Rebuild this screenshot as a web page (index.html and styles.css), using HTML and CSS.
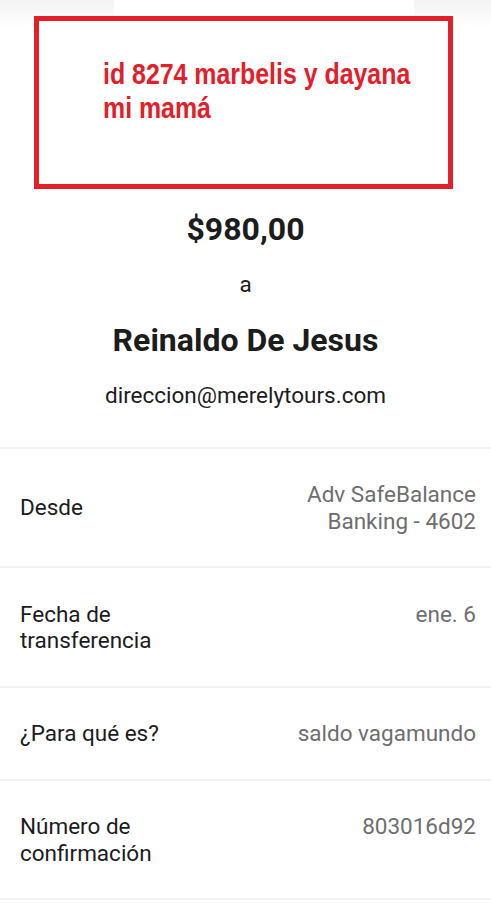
FILE: index.html
```html
<!DOCTYPE html>
<html lang="es">
<head>
<meta charset="utf-8">
<title>Transferencia</title>
<link rel="stylesheet" href="styles.css">
</head>
<body>
<header class="top">
  <div class="note">
    <p class="note-text"><span class="note-line">id 8274 marbelis y dayana</span><span class="note-line">mi mamá</span></p>
  </div>
</header>
<section class="summary">
  <div class="amount">$980,00</div>
  <div class="to">a</div>
  <div class="name">Reinaldo De Jesus</div>
  <div class="email">direccion@merelytours.com</div>
</section>
<section class="details">
  <div class="row">
    <div class="label">Desde</div>
    <div class="value">Adv SafeBalance<br>Banking - 4602</div>
  </div>
  <div class="row">
    <div class="label">Fecha de<br>transferencia</div>
    <div class="value">ene. 6</div>
  </div>
  <div class="row">
    <div class="label">¿Para qué es?</div>
    <div class="value">saldo vagamundo</div>
  </div>
  <div class="row">
    <div class="label">Número de<br>confirmación</div>
    <div class="value">803016d92</div>
  </div>
</section>
</body>
</html>
```
FILE: styles.css
```css
html, body {
  margin: 0;
  padding: 0;
  background: #ffffff;
}
body {
  width: 491px;
  font-family: Roboto, "Liberation Sans", Arial, sans-serif;
  color: #1c1c1c;
}
.top {
  height: 189px;
  padding-top: 16px;
  box-sizing: border-box;
  background:
    linear-gradient(to bottom, #f3f3f3, #ffffff 27px) left top / 114px 27px no-repeat,
    linear-gradient(to bottom, #f3f3f3, #ffffff 27px) right top / 77px 27px no-repeat;
}
.note {
  margin-left: 34px;
  width: 419px;
  height: 173px;
  box-sizing: border-box;
  border: 5px solid #e3202a;
  background: #ffffff;
  padding: 36px 0 0 64px;
}
.note-text {
  margin: 0;
  display: flex;
  flex-direction: column;
  align-items: flex-start;
  font-family: "Liberation Sans", Arial, sans-serif;
  font-weight: 700;
  font-size: 30px;
  line-height: 34px;
  color: #e3202a;
}
.note-line {
  white-space: nowrap;
  transform: scaleX(0.83);
  transform-origin: left center;
}
.summary {
  display: flex;
  flex-direction: column;
  align-items: center;
  padding-top: 21px;
  padding-bottom: 38px;
}
.amount {
  font-size: 32px;
  line-height: 38px;
  font-weight: 700;
}
.to {
  margin-top: 23px;
  font-size: 22.5px;
  line-height: 26.5px;
}
.name {
  margin-top: 23.5px;
  font-size: 32px;
  line-height: 38px;
  font-weight: 700;
}
.email {
  margin-top: 23px;
  font-size: 22.5px;
  line-height: 26.5px;
}
.details {
  display: flex;
  flex-direction: column;
}
.row {
  display: flex;
  justify-content: space-between;
  gap: 20px;
  border-top: 2px solid #f2f2f2;
  padding: 32.5px 15px 32px 20px;
  font-size: 22.5px;
  line-height: 26.5px;
}
.row:last-child {
  border-bottom: 2px solid #f2f2f2;
}
.label {
  align-self: center;
  color: #1c1c1c;
}
.value {
  align-self: flex-start;
  text-align: right;
  color: #6e6e6e;
}
```
